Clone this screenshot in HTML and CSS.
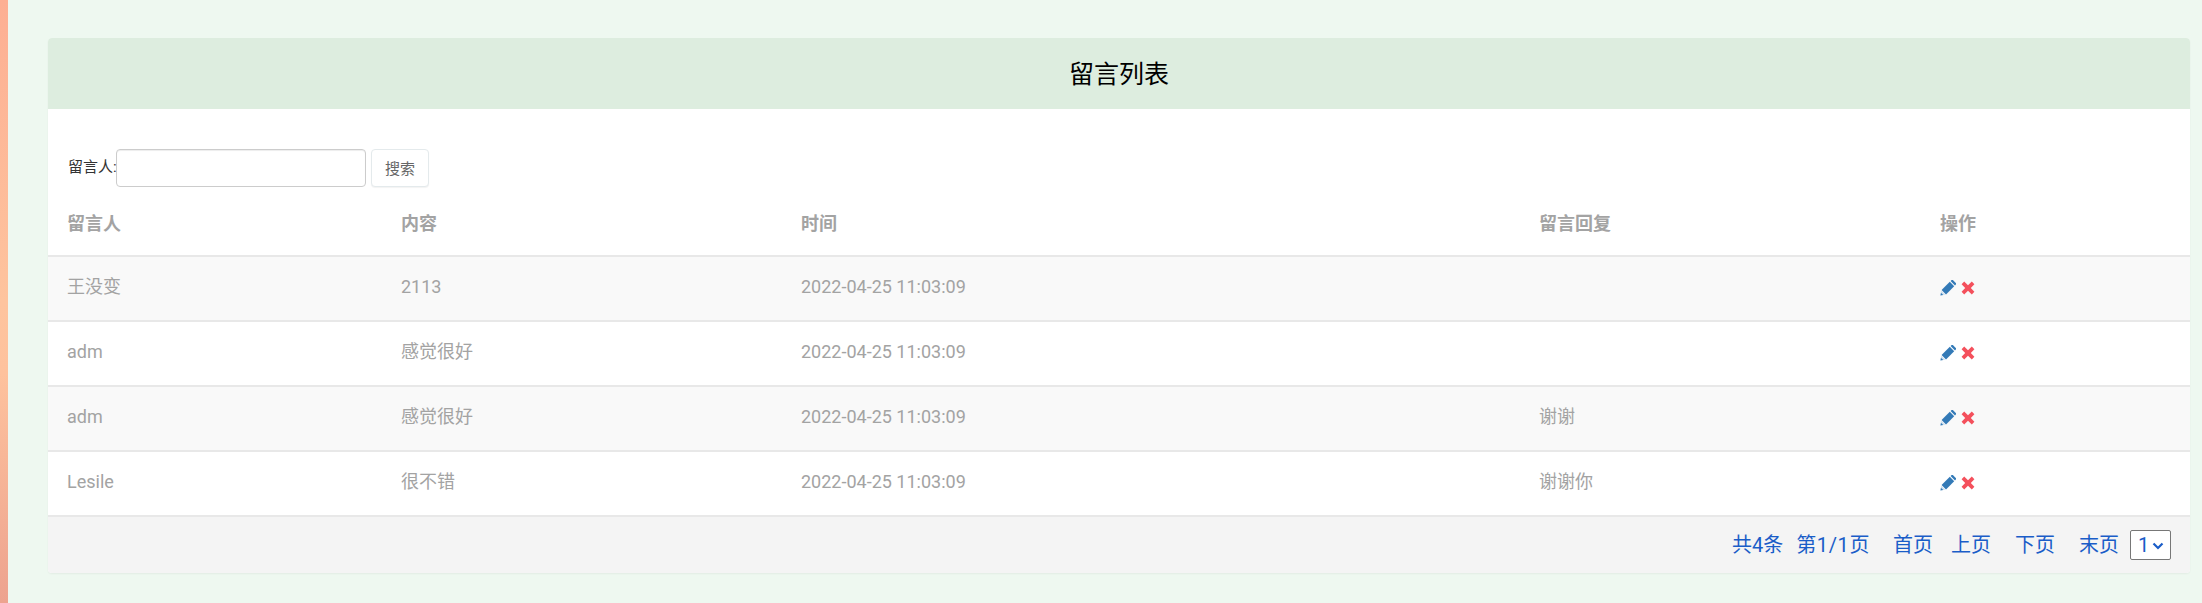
FILE: index.html
```html
<!DOCTYPE html>
<html lang="zh-CN">
<head>
    <meta charset="UTF-8">
    <title>留言列表</title>
    <link rel="stylesheet" href="styles.css">
</head>
<body>
    <div class="sidebar"></div>
    <div class="main">
        <div class="panel">
            <h2 class="panel-title">留言列表</h2>
            <form class="search">
                <label class="search-label">留言人:</label><input type="text" class="search-input"><button type="button" class="search-btn">搜索</button>
            </form>
            <table class="list">
                <thead>
                    <tr><th class="c1">留言人</th><th class="c2">内容</th><th class="c3">时间</th><th class="c4">留言回复</th><th>操作</th></tr>
                </thead>
                <tbody>
                    <tr>
                        <td>王没变</td><td>2113</td><td>2022-04-25 11:03:09</td><td></td>
                        <td class="ops">
                            <svg class="icon edit" viewBox="0 0 16 16"><path d="M1.6 10l8.2-8.2 4.4 4.4-8.2 8.2z"/><path class="tip" d="M1.3 10.8l3.9 3.9-1.6 0.4-2.7-2.7z"/><path d="M0.4 15.6l0.5-2.9 2.4 2.4z"/><path d="M10.6 1l0.8-0.8c0.5-0.5 1.2-0.5 1.7 0l2.7 2.7c0.5 0.5 0.5 1.2 0 1.7l-0.8 0.8z"/></svg>
                            <svg class="icon del" viewBox="0 0 14 14"><path d="M3.2 0.6l3.8 3.6 3.8-3.6 2.6 2.6-3.6 3.8 3.6 3.8-2.6 2.6-3.8-3.6-3.8 3.6-2.6-2.6 3.6-3.8-3.6-3.8z"/></svg>
                        </td>
                    </tr>
                    <tr>
                        <td>adm</td><td>感觉很好</td><td>2022-04-25 11:03:09</td><td></td>
                        <td class="ops">
                            <svg class="icon edit" viewBox="0 0 16 16"><path d="M1.6 10l8.2-8.2 4.4 4.4-8.2 8.2z"/><path class="tip" d="M1.3 10.8l3.9 3.9-1.6 0.4-2.7-2.7z"/><path d="M0.4 15.6l0.5-2.9 2.4 2.4z"/><path d="M10.6 1l0.8-0.8c0.5-0.5 1.2-0.5 1.7 0l2.7 2.7c0.5 0.5 0.5 1.2 0 1.7l-0.8 0.8z"/></svg>
                            <svg class="icon del" viewBox="0 0 14 14"><path d="M3.2 0.6l3.8 3.6 3.8-3.6 2.6 2.6-3.6 3.8 3.6 3.8-2.6 2.6-3.8-3.6-3.8 3.6-2.6-2.6 3.6-3.8-3.6-3.8z"/></svg>
                        </td>
                    </tr>
                    <tr>
                        <td>adm</td><td>感觉很好</td><td>2022-04-25 11:03:09</td><td>谢谢</td>
                        <td class="ops">
                            <svg class="icon edit" viewBox="0 0 16 16"><path d="M1.6 10l8.2-8.2 4.4 4.4-8.2 8.2z"/><path class="tip" d="M1.3 10.8l3.9 3.9-1.6 0.4-2.7-2.7z"/><path d="M0.4 15.6l0.5-2.9 2.4 2.4z"/><path d="M10.6 1l0.8-0.8c0.5-0.5 1.2-0.5 1.7 0l2.7 2.7c0.5 0.5 0.5 1.2 0 1.7l-0.8 0.8z"/></svg>
                            <svg class="icon del" viewBox="0 0 14 14"><path d="M3.2 0.6l3.8 3.6 3.8-3.6 2.6 2.6-3.6 3.8 3.6 3.8-2.6 2.6-3.8-3.6-3.8 3.6-2.6-2.6 3.6-3.8-3.6-3.8z"/></svg>
                        </td>
                    </tr>
                    <tr>
                        <td>Lesile</td><td>很不错</td><td>2022-04-25 11:03:09</td><td>谢谢你</td>
                        <td class="ops">
                            <svg class="icon edit" viewBox="0 0 16 16"><path d="M1.6 10l8.2-8.2 4.4 4.4-8.2 8.2z"/><path class="tip" d="M1.3 10.8l3.9 3.9-1.6 0.4-2.7-2.7z"/><path d="M0.4 15.6l0.5-2.9 2.4 2.4z"/><path d="M10.6 1l0.8-0.8c0.5-0.5 1.2-0.5 1.7 0l2.7 2.7c0.5 0.5 0.5 1.2 0 1.7l-0.8 0.8z"/></svg>
                            <svg class="icon del" viewBox="0 0 14 14"><path d="M3.2 0.6l3.8 3.6 3.8-3.6 2.6 2.6-3.6 3.8 3.6 3.8-2.6 2.6-3.8-3.6-3.8 3.6-2.6-2.6 3.6-3.8-3.6-3.8z"/></svg>
                        </td>
                    </tr>
                </tbody>
            </table>
            <div class="pager">
                <span>共4条</span>
                <span class="page-no">第1/1页</span>
                <a class="first">首页</a>
                <a class="prev">上页</a>
                <a class="next">下页</a>
                <a class="last">末页</a>
                <div class="select-wrap">
                    <select class="page-select"><option>1</option></select>
                    <svg class="chevron" viewBox="0 0 12 8"><path d="M1.5 1.5l4.5 4.5 4.5-4.5"/></svg>
                </div>
            </div>
        </div>
    </div>
</body>
</html>
```

FILE: styles.css
```css
html, body {
    height: 100%;
}
body {
    margin: 0;
    display: flex;
    background-color: #eef8f0;
    font-family: Roboto, "Noto Sans CJK SC", sans-serif;
    overflow: hidden;
}
.sidebar {
    width: 8px;
    flex-shrink: 0;
    background: linear-gradient(180deg, #fdaf93 0%, #fec49e 50%, #fec29d 62%, #eda38f 100%);
}
.main {
    flex: 1;
    padding: 38px 12px 0 40px;
}
.panel {
    background: #fff;
    border-radius: 4px;
    box-shadow: 0 1px 2px rgba(0, 0, 0, 0.05);
    overflow: hidden;
}
.panel-title {
    margin: 0;
    height: 71px;
    line-height: 73px;
    text-align: center;
    font-size: 25px;
    font-weight: 400;
    color: #000;
    background: #ddeddf;
}
.search {
    display: flex;
    align-items: center;
    height: 38px;
    margin-top: 40px;
    padding-left: 20px;
    font-size: 15px;
    line-height: 20px;
    color: #333;
}
.search-label {
    width: 48px;
    white-space: nowrap;
    padding-bottom: 2px;
}
.search-input {
    width: 250px;
    height: 38px;
    box-sizing: border-box;
    margin: 0;
    border: 1px solid #ccc;
    border-radius: 4px;
    box-shadow: inset 0 1px 1px rgba(0, 0, 0, 0.075);
}
.search-btn {
    width: 58px;
    height: 38px;
    margin-left: 5px;
    padding: 0 0 2px;
    background: #fff;
    border: 1px solid #e4eaec;
    border-radius: 4px;
    box-shadow: 0 1px 1px rgba(0, 0, 0, 0.05);
    font-family: inherit;
    font-size: 15px;
    color: #666;
}
.list {
    width: 100%;
    border-collapse: collapse;
    table-layout: fixed;
    font-size: 18px;
    line-height: 24px;
    color: #a3a3a3;
}
.list th {
    height: 69px;
    box-sizing: border-box;
    padding: 6px 0 0 19px;
    text-align: left;
    font-weight: 700;
    font-size: 18px;
    color: #a3a3a3;
    border-bottom: 2px solid #e8e8e8;
}
.list td {
    height: 65px;
    padding: 0 0 3px 19px;
    box-sizing: border-box;
    border-bottom: 2px solid #e8e8e8;
}
.c1 { width: 334px; }
.c2 { width: 400px; }
.c3 { width: 738px; }
.c4 { width: 401px; }
.list tbody tr:nth-child(odd) {
    background: #f9f9f9;
}
.icon {
    width: 16px;
    height: 16px;
    vertical-align: middle;
}
.edit { fill: #337ab7; }
.edit .tip { fill: #cfe0ee; }
.del {
    width: 14px;
    height: 14px;
    margin-left: 1px;
    fill: #f4505c;
}
.pager {
    display: flex;
    align-items: center;
    justify-content: flex-end;
    height: 56px;
    padding-right: 19px;
    background: #f4f4f4;
    font-size: 20px;
    line-height: 28px;
    color: #1a5dc8;
}
.page-no {
    margin-left: 13px;
    letter-spacing: 0.6px;
}
.first { margin-left: 23px; }
.prev { margin-left: 18px; }
.next { margin-left: 24px; }
.last { margin-left: 24px; }
.select-wrap {
    position: relative;
    margin-left: 11px;
    height: 30px;
}
.page-select {
    display: block;
    width: 41px;
    height: 30px;
    padding: 0 0 0 7px;
    appearance: none;
    background: #fff;
    border: 1px solid #777;
    border-radius: 2px;
    font-family: inherit;
    font-size: 20px;
    color: #1a5dc8;
}
.chevron {
    position: absolute;
    right: 7px;
    top: 12px;
    width: 12px;
    height: 8px;
    fill: none;
    stroke: #1a5dc8;
    stroke-width: 2.2;
}
```
